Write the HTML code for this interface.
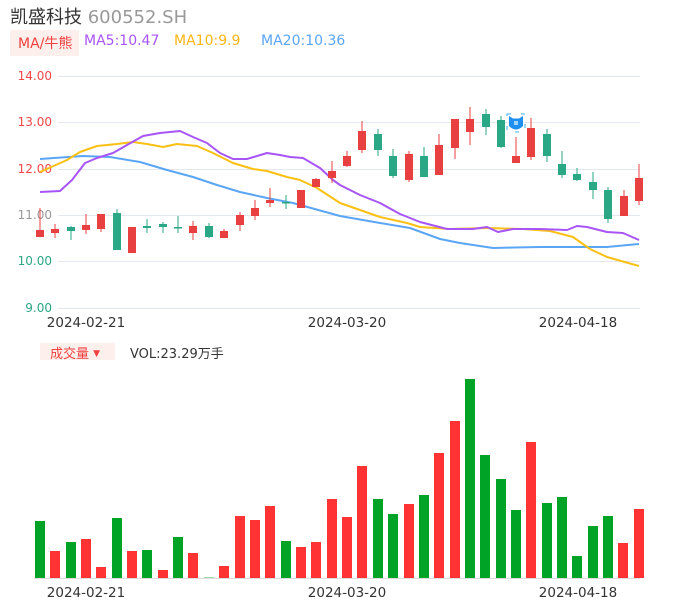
<!DOCTYPE html>
<html><head><meta charset="utf-8"><style>
html,body{margin:0;padding:0;background:#fff;width:686px;height:606px;overflow:hidden}
body{font-family:"DejaVu Sans","Noto Sans CJK SC",sans-serif;position:relative}
.t{position:absolute;white-space:nowrap}
</style></head><body>
<div class="t" style="left:10px;top:3px;font-size:18px;color:#333">凯盛科技 <span style="color:#999">600552.SH</span></div>
<div class="t" style="left:10px;top:30px;width:69px;height:26px;background:#fdf0ec"></div>
<div class="t" style="left:18px;top:33px;font-size:14px;color:#f04040">MA/牛熊</div>
<div class="t" style="left:84px;top:33px;font-size:14px;color:#a855f7">MA5:10.47</div>
<div class="t" style="left:174px;top:33px;font-size:14px;color:#fbb614">MA10:9.9</div>
<div class="t" style="left:261px;top:33px;font-size:14px;color:#5aa6f5">MA20:10.36</div>
<div class="t" style="left:40px;top:343px;width:75px;height:17px;background:#fdf0ec"></div>
<div class="t" style="left:50px;top:343px;font-size:13px;color:#f04040">成交量 <span style="font-size:9px;vertical-align:2px">▼</span></div>
<div class="t" style="left:130px;top:343px;font-size:13px;color:#333">VOL:23.29万手</div>
<svg width="686" height="606" style="position:absolute;left:0;top:0" font-family="DejaVu Sans, sans-serif">
<g stroke="#e3e7f0" stroke-width="1">
<line x1="58" x2="640" y1="76.5" y2="76.5"/><line x1="58" x2="640" y1="122.5" y2="122.5"/><line x1="58" x2="640" y1="169.5" y2="169.5"/><line x1="58" x2="640" y1="215.5" y2="215.5"/><line x1="58" x2="640" y1="261.5" y2="261.5"/><line x1="58" x2="640" y1="308.5" y2="308.5"/>
</g>
<g font-size="12" text-anchor="end">
<text x="52" y="80" fill="#f04848">14.00</text><text x="52" y="126" fill="#f04848">13.00</text><text x="52" y="173" fill="#f04848">12.00</text><text x="52" y="219" fill="#999">11.00</text><text x="52" y="265" fill="#2aa784">10.00</text><text x="52" y="312" fill="#2aa784">9.00</text>
</g>
<g font-size="13.5" fill="#333" text-anchor="middle">
<text x="86" y="327">2024-02-21</text><text x="347" y="327">2024-03-20</text><text x="578" y="327">2024-04-18</text>
<text x="86" y="597">2024-02-21</text><text x="347" y="597">2024-03-20</text><text x="578" y="597">2024-04-18</text>
</g>
<g fill="none" stroke-width="2" stroke-linejoin="round">
<polyline stroke="#5aa6f5" points="40,159 83,156 110,157 140,162 167,170 193,177 217,185 240,192 267,198 293,203 340,216 380,223 410,228 440,239 460,243 493,248 540,247 587,247 607,247 639,244"/>
<polyline stroke="#fbc014" points="40,172 67,160 80,152 97,146 117,144 133,142 147,144 163,147 177,144 197,146 213,153 233,163 253,169 267,171 287,177 300,180 317,188 340,203 360,210 380,217 407,223 420,227 450,229 487,228 523,229 550,231 573,237 590,249 607,257 639,266"/>
<polyline stroke="#a855f7" points="40,192 60,191 72,180 85,163 97,158 113,153 127,145 143,136 160,133 180,131 193,137 207,143 220,153 233,159 247,159 267,153 280,155 290,157 303,158 320,168 333,180 340,185 360,195 380,203 400,214 420,222 447,229 473,229 487,227 498,232 513,229 540,229 567,230 577,226 587,227 607,232 623,233 639,240"/>
</g>
<g stroke-width="1">
<line x1="40" x2="40" y1="208" y2="237" stroke="#e84040"/><rect x="36" y="230" width="8" height="7" fill="#e84040"/>
<line x1="55" x2="55" y1="224" y2="238" stroke="#e84040"/><rect x="51" y="229" width="8" height="4" fill="#e84040"/>
<line x1="71" x2="71" y1="226" y2="240" stroke="#2aa784"/><rect x="67" y="227" width="8" height="4" fill="#2aa784"/>
<line x1="86" x2="86" y1="214" y2="234" stroke="#e84040"/><rect x="82" y="225" width="8" height="5" fill="#e84040"/>
<line x1="101" x2="101" y1="214" y2="232" stroke="#e84040"/><rect x="97" y="214" width="8" height="15" fill="#e84040"/>
<line x1="117" x2="117" y1="209" y2="250" stroke="#2aa784"/><rect x="113" y="213" width="8" height="37" fill="#2aa784"/>
<line x1="132" x2="132" y1="227" y2="253" stroke="#e84040"/><rect x="128" y="227" width="8" height="26" fill="#e84040"/>
<line x1="147" x2="147" y1="219" y2="233" stroke="#2aa784"/><rect x="143" y="226" width="8" height="2" fill="#2aa784"/>
<line x1="163" x2="163" y1="222" y2="233" stroke="#2aa784"/><rect x="159" y="224" width="8" height="3" fill="#2aa784"/>
<line x1="178" x2="178" y1="216" y2="233" stroke="#2aa784"/><rect x="174" y="227" width="8" height="1.5" fill="#2aa784"/>
<line x1="193" x2="193" y1="221" y2="240" stroke="#e84040"/><rect x="189" y="226" width="8" height="7" fill="#e84040"/>
<line x1="209" x2="209" y1="223" y2="238" stroke="#2aa784"/><rect x="205" y="226" width="8" height="11" fill="#2aa784"/>
<line x1="224" x2="224" y1="229" y2="238" stroke="#e84040"/><rect x="220" y="231" width="8" height="7" fill="#e84040"/>
<line x1="240" x2="240" y1="212" y2="231" stroke="#e84040"/><rect x="236" y="215" width="8" height="10" fill="#e84040"/>
<line x1="255" x2="255" y1="200" y2="220" stroke="#e84040"/><rect x="251" y="208" width="8" height="8" fill="#e84040"/>
<line x1="270" x2="270" y1="188" y2="207" stroke="#e84040"/><rect x="266" y="200" width="8" height="3" fill="#e84040"/>
<line x1="286" x2="286" y1="195" y2="209" stroke="#2aa784"/><rect x="282" y="202" width="8" height="1.5" fill="#2aa784"/>
<line x1="301" x2="301" y1="190" y2="208" stroke="#e84040"/><rect x="297" y="190" width="8" height="18" fill="#e84040"/>
<line x1="316" x2="316" y1="178" y2="187" stroke="#e84040"/><rect x="312" y="179" width="8" height="8" fill="#e84040"/>
<line x1="332" x2="332" y1="161" y2="183" stroke="#e84040"/><rect x="328" y="171" width="8" height="7" fill="#e84040"/>
<line x1="347" x2="347" y1="151" y2="167" stroke="#e84040"/><rect x="343" y="156" width="8" height="10" fill="#e84040"/>
<line x1="362" x2="362" y1="121" y2="153" stroke="#e84040"/><rect x="358" y="131" width="8" height="19" fill="#e84040"/>
<line x1="378" x2="378" y1="129" y2="156" stroke="#2aa784"/><rect x="374" y="134" width="8" height="16" fill="#2aa784"/>
<line x1="393" x2="393" y1="149" y2="178" stroke="#2aa784"/><rect x="389" y="156" width="8" height="20" fill="#2aa784"/>
<line x1="409" x2="409" y1="151" y2="182" stroke="#e84040"/><rect x="405" y="154" width="8" height="26" fill="#e84040"/>
<line x1="424" x2="424" y1="147" y2="177" stroke="#2aa784"/><rect x="420" y="156" width="8" height="21" fill="#2aa784"/>
<line x1="439" x2="439" y1="134" y2="175" stroke="#e84040"/><rect x="435" y="145" width="8" height="30" fill="#e84040"/>
<line x1="455" x2="455" y1="119" y2="159" stroke="#e84040"/><rect x="451" y="119" width="8" height="29" fill="#e84040"/>
<line x1="470" x2="470" y1="107" y2="145" stroke="#e84040"/><rect x="466" y="119" width="8" height="13" fill="#e84040"/>
<line x1="486" x2="486" y1="109" y2="135" stroke="#2aa784"/><rect x="482" y="114" width="8" height="13" fill="#2aa784"/>
<line x1="501" x2="501" y1="116" y2="148" stroke="#2aa784"/><rect x="497" y="120" width="8" height="27" fill="#2aa784"/>
<line x1="516" x2="516" y1="137" y2="163" stroke="#e84040"/><rect x="512" y="156" width="8" height="7" fill="#e84040"/>
<line x1="531" x2="531" y1="118" y2="160" stroke="#e84040"/><rect x="527" y="128" width="8" height="29" fill="#e84040"/>
<line x1="547" x2="547" y1="129" y2="162" stroke="#2aa784"/><rect x="543" y="134" width="8" height="22" fill="#2aa784"/>
<line x1="562" x2="562" y1="151" y2="178" stroke="#2aa784"/><rect x="558" y="164" width="8" height="11" fill="#2aa784"/>
<line x1="577" x2="577" y1="168" y2="181" stroke="#2aa784"/><rect x="573" y="174" width="8" height="6" fill="#2aa784"/>
<line x1="593" x2="593" y1="172" y2="199" stroke="#2aa784"/><rect x="589" y="182" width="8" height="8" fill="#2aa784"/>
<line x1="608" x2="608" y1="187" y2="223" stroke="#2aa784"/><rect x="604" y="190" width="8" height="29" fill="#2aa784"/>
<line x1="624" x2="624" y1="190" y2="216" stroke="#e84040"/><rect x="620" y="196" width="8" height="20" fill="#e84040"/>
<line x1="639" x2="639" y1="164" y2="205" stroke="#e84040"/><rect x="635" y="178" width="8" height="23" fill="#e84040"/>
</g>
<g>
<rect x="507" y="114" width="18" height="18" fill="none" stroke="#3ab0f8" stroke-width="1" stroke-dasharray="4 10"/>
<path d="M509 116 L513 118.5 L519 118.5 L523 116 L523 126 Q516 133 509 126 Z" fill="#1f8ff0"/>
<rect x="514" y="121" width="4" height="4" fill="#9fd4ff"/>
</g>
<line x1="34" x2="640" y1="578.5" y2="578.5" stroke="#ddd"/>
<g>
<rect x="35" y="521" width="10" height="57" fill="#00a325"/>
<rect x="50" y="551" width="10" height="27" fill="#f33"/>
<rect x="66" y="542" width="10" height="36" fill="#00a325"/>
<rect x="81" y="539" width="10" height="39" fill="#f33"/>
<rect x="96" y="567" width="10" height="11" fill="#f33"/>
<rect x="112" y="518" width="10" height="60" fill="#00a325"/>
<rect x="127" y="551" width="10" height="27" fill="#f33"/>
<rect x="142" y="550" width="10" height="28" fill="#00a325"/>
<rect x="158" y="570" width="10" height="8" fill="#f33"/>
<rect x="173" y="537" width="10" height="41" fill="#00a325"/>
<rect x="188" y="553" width="10" height="25" fill="#f33"/>
<rect x="204" y="577" width="10" height="1" fill="#9ed9a8"/>
<rect x="219" y="566" width="10" height="12" fill="#f33"/>
<rect x="235" y="516" width="10" height="62" fill="#f33"/>
<rect x="250" y="520" width="10" height="58" fill="#f33"/>
<rect x="265" y="506" width="10" height="72" fill="#f33"/>
<rect x="281" y="541" width="10" height="37" fill="#00a325"/>
<rect x="296" y="547" width="10" height="31" fill="#f33"/>
<rect x="311" y="542" width="10" height="36" fill="#f33"/>
<rect x="327" y="499" width="10" height="79" fill="#f33"/>
<rect x="342" y="517" width="10" height="61" fill="#f33"/>
<rect x="357" y="466" width="10" height="112" fill="#f33"/>
<rect x="373" y="499" width="10" height="79" fill="#00a325"/>
<rect x="388" y="514" width="10" height="64" fill="#00a325"/>
<rect x="404" y="504" width="10" height="74" fill="#f33"/>
<rect x="419" y="495" width="10" height="83" fill="#00a325"/>
<rect x="434" y="453" width="10" height="125" fill="#f33"/>
<rect x="450" y="421" width="10" height="157" fill="#f33"/>
<rect x="465" y="379" width="10" height="199" fill="#00a325"/>
<rect x="480" y="455" width="10" height="123" fill="#00a325"/>
<rect x="496" y="479" width="10" height="99" fill="#00a325"/>
<rect x="511" y="510" width="10" height="68" fill="#00a325"/>
<rect x="526" y="442" width="10" height="136" fill="#f33"/>
<rect x="542" y="503" width="10" height="75" fill="#00a325"/>
<rect x="557" y="497" width="10" height="81" fill="#00a325"/>
<rect x="572" y="556" width="10" height="22" fill="#00a325"/>
<rect x="588" y="526" width="10" height="52" fill="#00a325"/>
<rect x="603" y="516" width="10" height="62" fill="#00a325"/>
<rect x="618" y="543" width="10" height="35" fill="#f33"/>
<rect x="634" y="509" width="10" height="69" fill="#f33"/>
</g>
</svg>
</body></html>
